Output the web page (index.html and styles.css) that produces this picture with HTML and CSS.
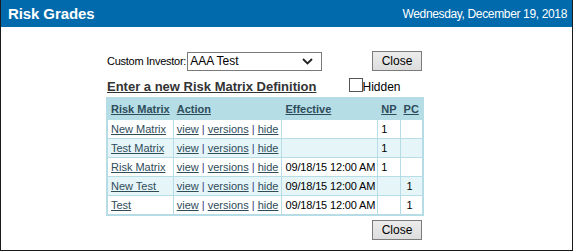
FILE: index.html
```html
<!DOCTYPE html>
<html lang="en">
<head>
  <meta charset="UTF-8" />
  <title>Risk Grades</title>
  <link rel="stylesheet" href="styles.css">
</head>
<body>
  <div class="window">
    <div class="titlebar">
      <span class="title">Risk Grades</span>
      <span class="date">Wednesday, December 19, 2018</span>
    </div>
    <div class="content">
      <div class="toolbar">
        <label for="investor">Custom Investor:</label>
        <div class="select">
          <span>AAA Test</span>
          <svg width="11" height="7" viewBox="0 0 11 7"><path d="M1 1 L5.5 5.5 L10 1" fill="none" stroke="#222" stroke-width="1.8"/></svg>
        </div>
        <button class="btn">Close</button>
      </div>

      <div class="heading-row">
        <a href="#" class="new-link">Enter a new Risk Matrix Definition</a>
        <label class="hidden-opt"><span class="check"></span>Hidden</label>
      </div>

      <table class="grid">
        <tr class="head">
          <th class="c-name"><a href="#">Risk Matrix</a></th>
          <th class="c-action"><a href="#">Action</a></th>
          <th class="c-eff"><a href="#">Effective</a></th>
          <th class="c-np"><a href="#">NP</a></th>
          <th class="c-pc"><a href="#">PC</a></th>
        </tr>
        <tr>
          <td><a href="#">New Matrix</a></td>
          <td><a href="#">view</a> <span class="sep">|</span> <a href="#">versions</a> <span class="sep">|</span> <a href="#">hide</a></td>
          <td class="eff"></td>
          <td>1</td>
          <td></td>
        </tr>
        <tr class="alt">
          <td><a href="#">Test Matrix</a></td>
          <td><a href="#">view</a> <span class="sep">|</span> <a href="#">versions</a> <span class="sep">|</span> <a href="#">hide</a></td>
          <td class="eff"></td>
          <td>1</td>
          <td></td>
        </tr>
        <tr>
          <td><a href="#">Risk Matrix</a></td>
          <td><a href="#">view</a> <span class="sep">|</span> <a href="#">versions</a> <span class="sep">|</span> <a href="#">hide</a></td>
          <td class="eff">09/18/15 12:00 AM</td>
          <td>1</td>
          <td></td>
        </tr>
        <tr class="alt">
          <td><a href="#">New Test&nbsp;</a></td>
          <td><a href="#">view</a> <span class="sep">|</span> <a href="#">versions</a> <span class="sep">|</span> <a href="#">hide</a></td>
          <td class="eff">09/18/15 12:00 AM</td>
          <td></td>
          <td class="pc">1</td>
        </tr>
        <tr>
          <td><a href="#">Test</a></td>
          <td><a href="#">view</a> <span class="sep">|</span> <a href="#">versions</a> <span class="sep">|</span> <a href="#">hide</a></td>
          <td class="eff">09/18/15 12:00 AM</td>
          <td></td>
          <td class="pc">1</td>
        </tr>
      </table>

      <div class="footer">
        <button class="btn">Close</button>
      </div>
    </div>
  </div>
</body>
</html>
```

FILE: styles.css
```css
body {
  margin: 0;
  font-family: "Liberation Sans", Arial, sans-serif;
  background: #fff;
}
.window {
  width: 573px;
  height: 251px;
  box-sizing: border-box;
  border: 1px solid #1a1a1a;
  border-top: none;
}
.titlebar {
  background: #006aad;
  color: #fff;
  height: 27px;
  display: flex;
  align-items: center;
  justify-content: space-between;
  padding: 0 5px 0 7px;
}
.title {
  font-size: 15px;
  font-weight: bold;
  letter-spacing: -0.1px;
}
.date {
  font-size: 12px;
  letter-spacing: -0.35px;
}
.content {
  width: 316px;
  padding: 24px 0 0 105px;
}
.toolbar {
  display: flex;
  align-items: center;
  height: 20px;
  font-size: 11px;
  color: #000;
}
.toolbar label {
  margin-left: 1px;
  margin-right: 1px;
  letter-spacing: -0.25px;
}
.select {
  width: 135px;
  height: 19px;
  box-sizing: border-box;
  border: 1px solid #7a7a7a;
  display: flex;
  align-items: center;
  justify-content: space-between;
  padding: 0 8px 0 2px;
  font-size: 12px;
}
.btn {
  margin-left: auto;
  width: 50px;
  height: 20px;
  padding: 0;
  font-family: "Liberation Sans", Arial, sans-serif;
  font-size: 12px;
  color: #000;
  background: linear-gradient(#ececec, #dddddd);
  border: 1px solid #7b7b7b;
  border-radius: 0;
}
.heading-row {
  display: flex;
  align-items: flex-end;
  margin-top: 3px;
  height: 20px;
}
.new-link {
  font-size: 13px;
  font-weight: bold;
  color: #333;
  margin-left: 1px;
}
.hidden-opt {
  display: flex;
  align-items: flex-end;
  margin-left: 32px;
  font-size: 12px;
  color: #000;
  margin-bottom: 0;
}
.check {
  width: 12px;
  height: 12px;
  border: 1px solid #555;
  background: #fff;
  margin-bottom: 2px;
}
.grid {
  margin-top: 3px;
  width: 315px;
  border-collapse: collapse;
  border: 2px solid #b6dde5;
  font-size: 11px;
}
.grid th,
.grid td {
  border: 1px solid #b6dde5;
  padding: 0 3px;
  text-align: left;
  height: 18px;
  white-space: nowrap;
}
.grid .head th {
  background: #b5dde6;
  height: 20px;
}
.grid a {
  color: #2e4c5a;
}
.grid th a {
  font-weight: bold;
}
.grid .alt td {
  background: #e6f5f8;
}
.grid td.eff {
  padding: 0 2px 0 3px;
  letter-spacing: -0.15px;
}
.sep {
  color: #3b3a80;
}
.c-name { width: 62px; }
.c-action { width: 100px; }
.c-eff { width: 88px; }
.c-np { width: 16px; }
.c-pc { width: 16px; }
.grid td.pc {
  padding-left: 6px;
}
.footer {
  display: flex;
  margin-top: 4px;
}
```
